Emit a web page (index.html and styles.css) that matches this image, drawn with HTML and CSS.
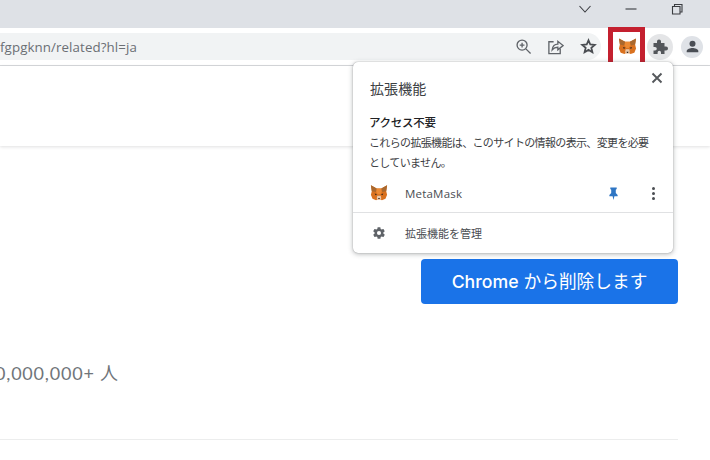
FILE: index.html
```html
<!DOCTYPE html>
<html lang="ja">
<head>
<meta charset="utf-8">
<title>Chrome Web Store</title>
<link rel="stylesheet" href="styles.css">
</head>
<body>
<svg class="defs" width="0" height="0" aria-hidden="true">
  <symbol id="fox" viewBox="0 0 20 20">
    <path fill="#d9711f" d="M1 1.500l6.500 3.500h5L19 1.500 18 8l1 4-1.800 4.500-4 1.500-1.200-.8H8l-1.200.8-4-1.500L1 12l1-4z"/>
    <path fill="#a9682e" d="M1 1.500l6.500 3.500L6.500 9 2 8zM19 1.500L12.500 5l1 4L18 8z"/>
    <path fill="#ec8a34" d="M7.500 5h5L13 9l-1.500 2.500h-3L7 9z"/>
    <path fill="#e8c9ac" d="M8 13h4l.5 3-1 1.200h-3l-1-1.200z"/>
    <path fill="#30241c" d="M5.200 10.500l2.600.8-1.600 1.200zM14.800 10.500l-2.600.8 1.600 1.200zM9 15.500h2l-.4 1.300H9.400z"/>
  </symbol>
</svg>

<header class="tabstrip">
  <svg class="win-icon" viewBox="0 0 14 14"><path d="M1.500 4l5.500 6 5.500-6"/></svg>
  <svg class="win-icon" viewBox="0 0 14 14"><path d="M1.500 7h11"/></svg>
  <svg class="win-icon" viewBox="0 0 14 14"><path d="M2.500 4.500h7.500v7.500H2.500zM4.500 4.500V2.500H12V10h-2"/></svg>
</header>

<div class="toolbar">
  <div class="omnibox">
    <span class="url">fgpgknn/related?hl=ja</span>
    <svg class="tool-icon zoom-icon" viewBox="0 0 18 18"><circle cx="7.500" cy="7.500" r="5.300"/><path d="M11.500 11.500l5 5M5 7.500h5M7.500 5v5"/></svg>
    <svg class="tool-icon share-icon" viewBox="0 0 18 18"><path d="M7 4H2v12.500h12V11"/><path d="M5.500 12.500C6 8.500 8.500 6.500 11.500 6.500V3.500L17 8l-5.500 4.500V9.800c-2.500 0-4.500.8-6 2.700z"/></svg>
    <svg class="tool-icon star-icon" viewBox="0 0 18 18"><path d="M9 2.500l1.900 4.400 4.700.4-3.600 3.100 1.100 4.600L9 12.600l-4.100 2.400L6 10.400 2.400 7.300l4.700-.4z"/></svg>
  </div>
  <div class="fox-slot"><svg class="fox-small"><use href="#fox"/></svg></div>
  <div class="puzzle-btn">
    <svg viewBox="0 0 16 16" class="puzzle"><path d="M1.500 5H5V3.500a2 2 0 0 1 4 0V5h3.500v3.500H14a2 2 0 0 1 0 4h-1.500V16h-3.500v-1.500a1.700 1.700 0 0 0-3.400 0V16H1.500v-3.500H3a1.800 1.800 0 0 0 0-3.600H1.500z" transform="translate(0 -1)"/></svg>
  </div>
  <div class="avatar">
    <svg viewBox="0 0 16 16"><circle cx="8" cy="5" r="3.200"/><path d="M1.800 14v-1.300c0-2.200 3.900-3.200 6.200-3.200s6.200 1 6.200 3.200V14z"/></svg>
  </div>
</div>

<main class="page">
  <div class="store-header"></div>
  <div class="content">
    <div class="action-row"><button class="remove-btn"><span class="btn-latin">Chrome</span> から削除します</button></div>
    <p class="users">0,000,000+ 人</p>
    <hr class="rule">
  </div>
</main>

<div class="highlight"></div>

<section class="popup">
  <svg class="close" viewBox="0 0 12 12"><path d="M1.500 1.500l9 9M10.500 1.500l-9 9"/></svg>
  <h1 class="popup-title">拡張機能</h1>
  <h2 class="access-title">アクセス不要</h2>
  <p class="access-text">これらの拡張機能は、このサイトの情報の表示、変更を必要としていません。</p>
  <div class="ext-row">
    <svg class="fox-list"><use href="#fox"/></svg>
    <span class="ext-name">MetaMask</span>
    <svg class="pin" viewBox="0 0 12 14"><path d="M2.500 0.500h7v1.500L8.500 2.800V6.500l2 2v1.500H7L6 14l-1-4H1.500V8.500l2-2V2.800L2.500 2z"/></svg>
    <span class="kebab"><i></i><i></i><i></i></span>
  </div>
  <div class="manage-row">
    <svg class="gear" viewBox="0 0 24 24"><path fill-rule="evenodd" d="M19.400 13c.04-.3.100-.65.100-1s-.06-.7-.1-1l2.100-1.650c.2-.15.25-.4.12-.64l-2-3.460c-.12-.22-.4-.3-.6-.22l-2.500 1a7.300 7.300 0 0 0-1.700-1l-.38-2.650A.5.500 0 0 0 14 2h-4a.5.500 0 0 0-.5.420L9.100 5.070c-.6.250-1.160.6-1.700 1l-2.500-1a.5.500 0 0 0-.6.220l-2 3.460c-.13.220-.07.490.12.640L4.570 11c-.04.330-.07.660-.07 1s.03.670.07 1l-2.100 1.650a.5.500 0 0 0-.12.640l2 3.460c.12.220.39.300.6.220l2.500-1c.52.400 1.080.74 1.700 1l.38 2.650c.04.240.25.420.5.420h4c.25 0 .46-.18.500-.42l.37-2.650c.6-.26 1.180-.6 1.700-1l2.500 1c.22.080.48 0 .6-.22l2-3.460a.5.500 0 0 0-.12-.64zM12 15.500a3.500 3.500 0 1 1 0-7 3.500 3.500 0 0 1 0 7z"/></svg>
    <span class="manage-text">拡張機能を管理</span>
  </div>
</section>
</body>
</html>
```
FILE: styles.css
```css
* { box-sizing: border-box; }
html, body { margin: 0; padding: 0; }
body {
  width: 710px;
  height: 460px;
  overflow: hidden;
  position: relative;
  background: #fff;
  font-family: "Open Sans", "Noto Sans CJK JP", sans-serif;
}
.defs { position: absolute; }

.tabstrip {
  height: 28px;
  background: #dee1e6;
  display: flex;
  align-items: flex-start;
  justify-content: flex-end;
  gap: 32px;
  padding: 2px 26px 0 0;
}
.win-icon { width: 14px; height: 14px; fill: none; stroke: #3a3c40; stroke-width: 1.100; }

.toolbar {
  height: 38px;
  background: #fff;
  border-bottom: 1px solid #d6d8db;
  display: flex;
  align-items: center;
}
.omnibox {
  width: 601px;
  height: 27px;
  background: #f1f3f4;
  border-radius: 0 14px 14px 0;
  display: flex;
  align-items: center;
  padding-right: 5px;
}
.url {
  font-size: 13.300px;
  color: #6b6f74;
  flex: 1;
  letter-spacing: 0.1px;
}
.tool-icon { width: 17px; height: 17px; fill: none; stroke: #5f6368; stroke-width: 1.400; margin-left: 15px; }
.star-icon { stroke: #4a4d52; stroke-width: 1.900; margin-left: 16px; margin-right: -1px; }
.fox-slot {
  width: 28px;
  height: 28px;
  margin-left: 12px;
  display: flex;
  align-items: center;
  justify-content: center;
}
.fox-small { width: 19px; height: 19px; }
.puzzle-btn {
  width: 26px;
  height: 26px;
  margin-left: 6px;
  border-radius: 50%;
  background: #e4e5e7;
  display: flex;
  align-items: center;
  justify-content: center;
}
.puzzle { width: 16px; height: 16px; fill: #53565a; }
.avatar {
  width: 22px;
  height: 22px;
  margin-left: 8px;
  border-radius: 50%;
  background: #dfe2e7;
  display: flex;
  align-items: center;
  justify-content: center;
}
.avatar svg { width: 15px; height: 15px; fill: #4a4e55; }

.store-header {
  height: 80px;
  background: #fff;
  box-shadow: 0 1px 3px rgba(60, 64, 67, 0.16);
}
.content {
  padding: 113px 32px 0 0;
}
.action-row { display: flex; justify-content: flex-end; }
.remove-btn {
  width: 257px;
  height: 45px;
  border: 0;
  border-radius: 4px;
  background: #1a73e8;
  color: #fff;
  font-family: "Inter", "Noto Sans CJK JP", sans-serif;
  font-size: 17.700px;
  font-weight: 400;
  padding: 0 0 3px;
}
.btn-latin { font-weight: 500; }
.users {
  margin: 58px 0 0;
  font-family: "Lato", "Noto Sans CJK JP", sans-serif;
  font-size: 18px;
  line-height: 22px;
  color: #70757a;
  text-indent: -5px;
  letter-spacing: 0.8px;
}
.rule {
  margin: 55px 0 0;
  border: 0;
  border-top: 1px solid #eceded;
}

.highlight {
  position: absolute;
  left: 608px;
  top: 27px;
  width: 37px;
  height: 40px;
  border: 5px solid #c4202f;
}

.popup {
  position: absolute;
  left: 353px;
  top: 62px;
  width: 320px;
  height: 191px;
  background: #fff;
  border-radius: 5px;
  box-shadow: 0 0 1px rgba(60, 64, 67, 0.55), 0 1px 5px rgba(60, 64, 67, 0.4);
  padding-top: 17px;
}
.close {
  position: absolute;
  right: 10px;
  top: 10px;
  width: 12px;
  height: 12px;
  fill: none;
  stroke: #55585c;
  stroke-width: 1.900;
}
.popup-title {
  margin: 0 0 0 17px;
  font-size: 14px;
  font-weight: 400;
  line-height: 19px;
  color: #3c4043;
  letter-spacing: 0.1px;
}
.access-title {
  margin: 16px 0 0 16px;
  font-size: 11.500px;
  font-weight: 500;
  line-height: 17px;
  color: #202124;
  letter-spacing: -0.3px;
}
.access-text {
  margin: 2px 16px 0 16px;
  font-size: 11px;
  line-height: 20px;
  color: #3c4043;
  height: 40px;
  letter-spacing: -0.65px;
}
.ext-row {
  display: flex;
  align-items: center;
  height: 30px;
  padding-left: 17px;
  margin-top: 5px;
}
.fox-list { width: 18px; height: 18px; }
.ext-name {
  margin-left: 17px;
  font-size: 11.500px;
  color: #4a4d52;
  flex: 1;
  letter-spacing: 0.2px;
}
.pin { width: 11px; height: 13px; fill: #2f76c4; margin-right: 33px; }
.kebab {
  display: flex;
  flex-direction: column;
  gap: 2px;
  margin-right: 18px;
}
.kebab i { width: 3px; height: 3px; background: #4a4d52; border-radius: 50%; display: block; }
.manage-row {
  display: flex;
  align-items: center;
  height: 41px;
  margin-top: 4px;
  padding-left: 19px;
  border-top: 1px solid #e0e1e3;
}
.gear { width: 14px; height: 14px; fill: #5f6368; }
.manage-text {
  margin-left: 19px;
  font-size: 11px;
  color: #4a4d52;
}
```
